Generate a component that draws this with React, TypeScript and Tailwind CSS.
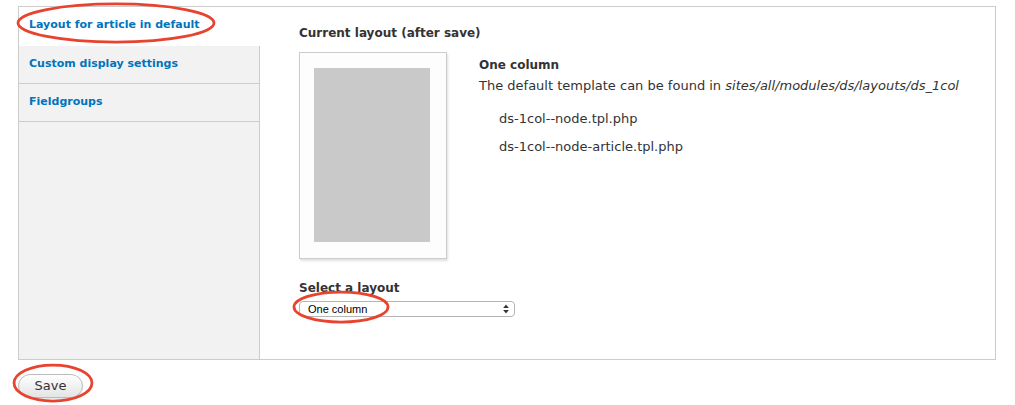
const tabs = [
  { label: 'Layout for article in default', active: true },
  { label: 'Custom display settings', active: false },
  { label: 'Fieldgroups', active: false },
]

function Annotations() {
  return (
    <svg
      className="pointer-events-none absolute inset-0"
      width="1015"
      height="405"
      viewBox="0 0 1015 405"
    >
      <g fill="none" stroke="#e8432f" strokeWidth="2.75">
        <ellipse cx="116" cy="23" rx="98" ry="19" />
        <ellipse cx="341" cy="307" rx="47" ry="15" />
        <ellipse cx="53" cy="383" rx="39" ry="18" />
      </g>
    </svg>
  )
}

export default function App() {
  return (
    <div className="relative h-[405px] w-[1015px] bg-white font-['DejaVu_Sans',sans-serif] text-[12px] text-[#333]">
      <div className="pl-[18px] pt-[6px]">
        <div className="flex h-[354px] w-[978px] border border-[#ccc]">
          <ul className="w-[241px] shrink-0 border-r border-[#ccc] bg-[#f2f2f2] text-[11px]">
            {tabs.map((tab) => (
              <li
                key={tab.label}
                className={
                  tab.active
                    ? 'relative -mr-px h-[39px] bg-white pl-[10px] pt-[10px] font-bold text-[#0074bd]'
                    : 'h-[38px] border-b border-[#ccc] pl-[10px] pt-[10px] font-bold text-[#0074bd]'
                }
              >
                {tab.label}
              </li>
            ))}
          </ul>
          <div className="flex-1 pl-[39px] pt-[17px]">
            <h3 className="font-bold">Current layout (after save)</h3>
            <div className="mt-[10px] flex">
              <div className="h-[207px] w-[148px] border border-[#ccc] bg-[#fdfdfd] px-[14px] pt-[15px] shadow-[1px_2px_2px_rgba(0,0,0,0.12)]">
                <div className="h-[174px] w-[116px] bg-[#c9c9c9]" />
              </div>
              <div className="pl-[32px] pt-[4px]">
                <p className="font-bold">One column</p>
                <p className="mt-[2px] text-[13px]">
                  The default template can be found in{' '}
                  <em>sites/all/modules/ds/layouts/ds_1col</em>
                </p>
                <p className="mt-[13px] pl-[20px] text-[13px]">ds-1col--node.tpl.php</p>
                <p className="mt-[9px] pl-[20px] text-[13px]">ds-1col--node-article.tpl.php</p>
              </div>
            </div>
            <label className="mt-[20px] block font-bold">Select a layout</label>
            <div className="mt-[4px] flex h-[16px] w-[216px] items-center justify-between rounded-[4px] border border-[#b5b5b5] bg-white pl-[8px] pr-[5px] font-['Liberation_Sans',sans-serif] text-[11px] text-black">
              <span>One column</span>
              <svg width="6" height="10" viewBox="0 0 6 10" fill="#333">
                <path d="M3 0.5 L5.8 4 L0.2 4 Z" />
                <path d="M3 9.5 L5.8 6 L0.2 6 Z" />
              </svg>
            </div>
          </div>
        </div>
        <button className="mt-[14px] h-[24px] w-[65px] rounded-full border border-[#bbb] bg-gradient-to-b from-white to-[#e4e4e4] text-[13px] text-[#333] shadow-[0_1px_1px_rgba(0,0,0,0.1)]">
          Save
        </button>
      </div>
      <Annotations />
    </div>
  )
}
